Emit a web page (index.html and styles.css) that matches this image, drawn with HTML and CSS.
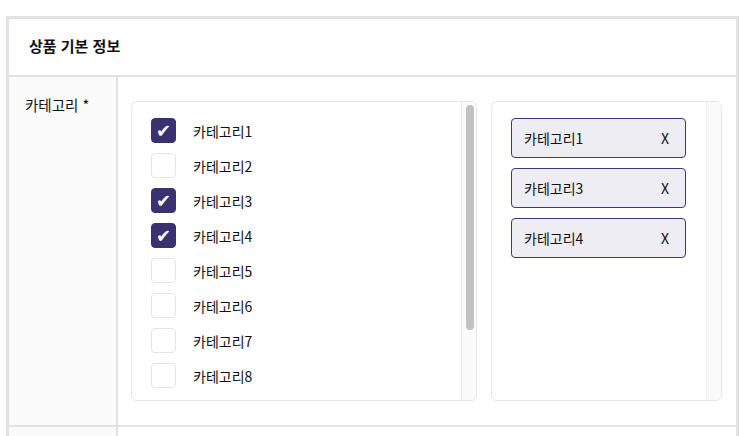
FILE: index.html
```html
<!DOCTYPE html>
<html lang="ko">
<head>
<meta charset="utf-8">
<link rel="stylesheet" href="styles.css">
</head>
<body>
<div class="panel">
  <div class="panel-head">상품 기본 정보</div>
  <div class="row">
    <div class="label">카테고리 *</div>
    <div class="field">
      <div class="box list-box">
        <div class="box-body list">
          <label class="opt"><span class="cb checked">✔</span><span>카테고리1</span></label>
          <label class="opt"><span class="cb"></span><span>카테고리2</span></label>
          <label class="opt"><span class="cb checked">✔</span><span>카테고리3</span></label>
          <label class="opt"><span class="cb checked">✔</span><span>카테고리4</span></label>
          <label class="opt"><span class="cb"></span><span>카테고리5</span></label>
          <label class="opt"><span class="cb"></span><span>카테고리6</span></label>
          <label class="opt"><span class="cb"></span><span>카테고리7</span></label>
          <label class="opt"><span class="cb"></span><span>카테고리8</span></label>
        </div>
        <div class="track"><div class="thumb"></div></div>
      </div>
      <div class="box tag-box">
        <div class="box-body tags">
          <div class="tag"><span>카테고리1</span><span class="x">X</span></div>
          <div class="tag"><span>카테고리3</span><span class="x">X</span></div>
          <div class="tag"><span>카테고리4</span><span class="x">X</span></div>
        </div>
        <div class="track"></div>
      </div>
    </div>
  </div>
  <div class="row">
    <div class="label"></div>
    <div class="field tall"></div>
  </div>
</div>
</body>
</html>
```

FILE: styles.css
```css
* { box-sizing: border-box; }
html, body { margin: 0; padding: 0; background: #fff; }
body {
  font-family: "Noto Sans CJK KR", "Noto Sans", sans-serif;
  font-size: 14px;
  color: #111;
}
.panel {
  margin: 16px 11px 0 6px;
  border: 3px solid #e2e2e2;
}
.panel-head {
  height: 58px;
  padding: 0 0 4px 20px;
  display: flex;
  align-items: center;
  font-weight: 700;
  font-size: 15px;
  border-bottom: 2px solid #e2e2e2;
}
.row {
  display: grid;
  grid-template-columns: 109px 1fr;
  border-bottom: 2px solid #e2e2e2;
}
.label {
  background: #fafafa;
  border-right: 2px solid #e2e2e2;
  padding: 18px 16px 16px 16px;
  line-height: 20px;
  font-size: 14.5px;
}
.field {
  display: flex;
  gap: 14px;
  padding: 24px 14px 24px 13px;
}
.field.tall { height: 120px; }
.box {
  height: 300px;
  border: 1px solid #e6e6e6;
  border-radius: 6px;
  overflow: hidden;
  display: flex;
}
.list-box { width: 346px; }
.tag-box { flex: 1; }
.box-body {
  flex: 1;
  padding: 16px 19px;
  display: flex;
  flex-direction: column;
  gap: 10px;
}
.tags { padding-right: 20px; }
.track {
  width: 15px;
  flex-shrink: 0;
  background: #fafafa;
  border-left: 1px solid #ececec;
  padding: 3px 2px 0 4px;
}
.thumb {
  height: 225px;
  background: #c1c1c1;
  border-radius: 4px;
}
.opt {
  display: flex;
  align-items: center;
  gap: 17px;
  flex-shrink: 0;
}
.cb {
  width: 25px;
  height: 25px;
  flex-shrink: 0;
  border: 1px solid #e4e4e4;
  border-radius: 4px;
  background: #fff;
  display: flex;
  align-items: center;
  justify-content: center;
  color: #fff;
  font-family: "DejaVu Sans", sans-serif;
  font-size: 18px;
  line-height: 1;
}
.cb.checked {
  background: #3a3171;
  border-color: #3a3171;
}
.tag {
  flex-shrink: 0;
  height: 40px;
  border: 1px solid #3f3777;
  border-radius: 4px;
  background: #eeedf3;
  display: flex;
  align-items: center;
  justify-content: space-between;
  padding: 0 16px 0 12px;
}
```
